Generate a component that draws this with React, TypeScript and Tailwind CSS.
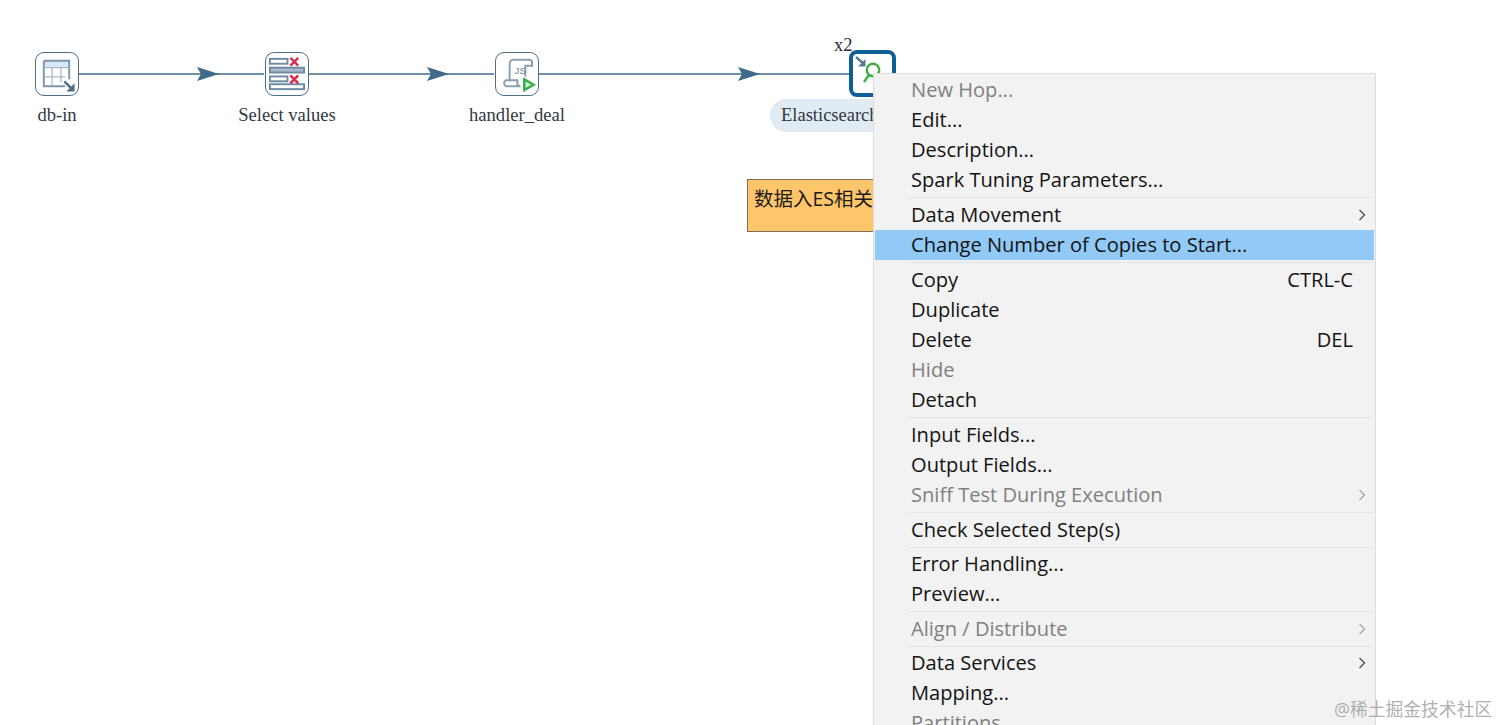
import React from "react";

const serif = "font-['Liberation_Serif',serif]";
const sans = "font-['Open_Sans','Noto_Sans_CJK_SC',sans-serif]";

function Hop({ x1, x2, ax }: { x1: number; x2: number; ax: number }) {
  return (
    <svg className="absolute left-0 top-0" width="1000" height="120">
      <line x1={x1} y1="74" x2={x2} y2="74" stroke="#3f6a8a" strokeWidth="1.5" />
      <path d={`M${ax} 67 L${ax + 22} 74 L${ax} 81 L${ax + 4} 74 Z`} fill="#3f6a8a" />
    </svg>
  );
}

function Node({ x, label, children }: { x: number; label: string; children: React.ReactNode }) {
  return (
    <div className="absolute top-[52px] w-[110px] flex flex-col items-center gap-[8px]" style={{ left: x }}>
      <div className="w-[44px] h-[44px] rounded-[9px] border-[1.5px] border-[#4d6f8c] bg-white overflow-hidden">
        <svg width="41" height="41" viewBox="0 0 42 42" className="block">{children}</svg>
      </div>
      <div className={`text-[18.6px] leading-[22px] text-[#33393f] whitespace-nowrap ${serif}`}>{label}</div>
    </div>
  );
}

type Row = { t: string; d?: boolean; s?: string; a?: boolean; h?: boolean } | "sep" | "sep4";

const rows: Row[] = [
  { t: "New Hop...", d: true },
  { t: "Edit..." },
  { t: "Description..." },
  { t: "Spark Tuning Parameters..." },
  "sep",
  { t: "Data Movement", a: true },
  { t: "Change Number of Copies to Start...", h: true },
  "sep",
  { t: "Copy", s: "CTRL-C" },
  { t: "Duplicate" },
  { t: "Delete", s: "DEL" },
  { t: "Hide", d: true },
  { t: "Detach" },
  "sep",
  { t: "Input Fields..." },
  { t: "Output Fields..." },
  { t: "Sniff Test During Execution", d: true, a: true },
  "sep",
  { t: "Check Selected Step(s)" },
  "sep4",
  { t: "Error Handling..." },
  { t: "Preview..." },
  "sep",
  { t: "Align / Distribute", d: true, a: true },
  "sep4",
  { t: "Data Services", a: true },
  { t: "Mapping..." },
  { t: "Partitions", d: true },
];

function Chevron({ dim }: { dim?: boolean }) {
  return (
    <svg className="absolute right-[8px] top-[9px]" width="8" height="12" viewBox="0 0 8 12" fill="none">
      <path d="M1.5 1 L6.5 6 L1.5 11" stroke={dim ? "#a8a8a8" : "#555555"} strokeWidth="1.4" />
    </svg>
  );
}

function Menu() {
  return (
    <div className={`absolute left-[873px] top-[73px] w-[503px] h-[680px] bg-[#f2f2f2] border border-[#dcdcdc] pt-[1px] px-[1px] text-[20.1px] ${sans}`}>
      {rows.map((r, i) =>
        r === "sep" || r === "sep4" ? (
          <div key={i} className={`${r === "sep" ? "h-[5px]" : "h-[4px]"} flex items-center pl-[33px]`}>
            <div className="h-px w-full bg-[#e4e4e4]" />
          </div>
        ) : (
          <div key={i} className={`relative h-[30px] pl-[36px] pr-[21px] flex items-center justify-between leading-[30px] whitespace-nowrap ${r.h ? "bg-[#91c9f7]" : ""} ${r.d ? "text-[#808080]" : "text-[#141414]"}`}>
            <span>{r.t}</span>
            {r.s && <span>{r.s}</span>}
            {r.a && <Chevron dim={r.d} />}
          </div>
        )
      )}
    </div>
  );
}

export default function App() {
  return (
    <div className="relative w-[1500px] h-[725px] overflow-hidden bg-white">
      <Hop x1={79} x2={264} ax={197} />
      <Hop x1={309} x2={494} ax={427} />
      <Hop x1={539} x2={850} ax={738} />

      <Node x={2} label="db-in">
        <path d="M8 8h26v7H8z" fill="#d8e8f5" />
        <path d="M8 8h26v19M8 8v26h22" fill="none" stroke="#7f95a8" strokeWidth="2" />
        <path d="M8 15h26M8 24.5h22M16.5 15v18M25.5 15v15" fill="none" stroke="#a9b8c5" strokeWidth="1.3" />
        <path d="M29 29l8 8" stroke="#4d6f8c" strokeWidth="2.6" />
        <path d="M39.5 31v8.5H31z" fill="#4d6f8c" />
      </Node>

      <Node x={232} label="Select values">
        <g fill="none" stroke="#6f8ba3" strokeWidth="2">
          <rect x="4" y="6" width="18" height="5" />
          <rect x="4" y="15" width="35" height="5" fill="#a7bbcb" />
          <rect x="4" y="24" width="18" height="5" />
          <rect x="4" y="32" width="35" height="5" />
        </g>
        <path d="M25 5l8 8M33 5l-8 8M25 23l8 8M33 23l-8 8" stroke="#d9304c" strokeWidth="2.6" />
      </Node>

      <Node x={462} label="handler_deal">
        <path d="M14 29V11a4 4 0 0 1 4-4h16a3 3 0 0 1 3 3v3h-7v11" fill="none" stroke="#8a9fb2" strokeWidth="2" />
        <path d="M10 34a3.5 3.5 0 0 1 0-6h12v2a3 3 0 0 0 3 4z" fill="none" stroke="#8a9fb2" strokeWidth="2" />
        <text x="19" y="22" fontSize="10" fill="#6f8499" fontFamily="Liberation Sans">JS</text>
        <path d="M29 27l9.5 5.5-9.5 5.5z" fill="#dff5df" stroke="#34b34a" strokeWidth="2.6" />
      </Node>

      <div className="absolute left-[849px] top-[50px] w-[47px] h-[47px] rounded-[8px] border-[4px] border-[#0f5f97] bg-white">
        <svg width="39" height="39" viewBox="0 0 39 39" className="block">
          <path d="M3 3l8 7" stroke="#5b7a96" strokeWidth="2.4" />
          <path d="M12.5 5v7.5H5z" fill="#5b7a96" />
          <circle cx="20" cy="16" r="6.2" fill="none" stroke="#3fae49" strokeWidth="2.4" />
          <path d="M16 21l-5 7" stroke="#3fae49" strokeWidth="2.4" />
        </svg>
      </div>
      <div className={`absolute left-[834px] top-[35px] text-[18.5px] leading-[20px] text-[#2b3036] ${serif}`}>x2</div>
      <div className={`absolute left-[770px] top-[99px] w-[120px] h-[33px] rounded-full bg-[#e1ebf4] pl-[11px] text-[18.5px] leading-[33px] text-[#33393f] whitespace-nowrap ${serif}`}>
        Elasticsearch
      </div>

      <div className={`absolute left-[747px] top-[179px] w-[140px] h-[53px] bg-[#ffc56a] border-[1.5px] border-[#7d7058] pl-[6px] pt-[5px] text-[19.5px] leading-[28px] text-[#1a1a1a] whitespace-nowrap ${sans}`}>
        数据入ES相关
      </div>

      <Menu />

      <div className={`absolute left-[1334px] top-[697px] text-[17.8px] leading-[24px] text-[#9a9a9a]/80 whitespace-nowrap ${sans}`}>
        @稀土掘金技术社区
      </div>
    </div>
  );
}
